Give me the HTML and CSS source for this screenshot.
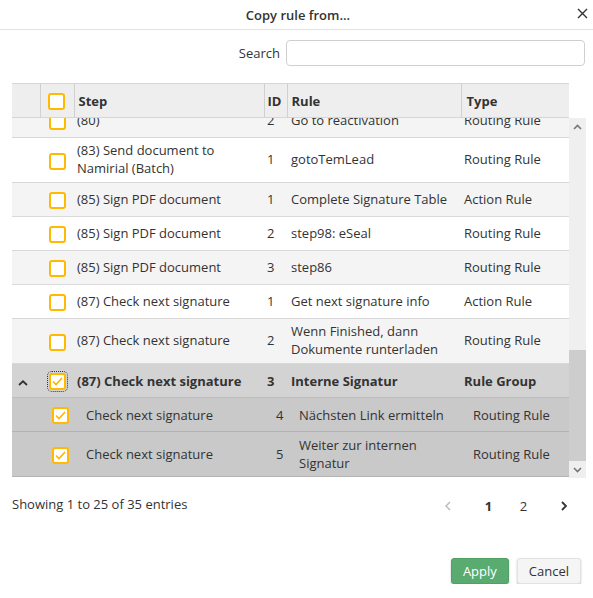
FILE: index.html
```html
<!DOCTYPE html>
<html lang="en">
<head>
  <meta charset="UTF-8">
  <title>Copy rule from...</title>
  <link rel="stylesheet" href="styles.css">
</head>
<body>

  <div class="dialog">
    <div class="dialog-header">
      <h1>Copy rule from...</h1>
      <button class="close-btn" title="Close">
        <svg width="11" height="11" viewBox="0 0 11 11"><path d="M1 1L10 10M10 1L1 10" stroke="#333" stroke-width="1.4" fill="none"/></svg>
      </button>
    </div>

    <div class="search-row">
      <label for="search">Search</label>
      <input type="text" id="search">
    </div>

    <div class="grid">
      <table class="grid-table grid-head">
        <colgroup>
          <col class="c-exp"><col class="c-sel"><col class="c-step"><col class="c-id"><col class="c-rule"><col class="c-type">
        </colgroup>
        <thead>
          <tr>
            <th></th>
            <th class="sel"><span class="cb"></span></th>
            <th>Step</th>
            <th>ID</th>
            <th>Rule</th>
            <th>Type</th>
          </tr>
        </thead>
      </table>

      <div class="grid-body">
        <div class="grid-scroll">
          <table class="grid-table rows">
            <colgroup>
              <col class="c-exp"><col class="c-sel"><col class="c-step"><col class="c-id"><col class="c-rule"><col class="c-type">
            </colgroup>
            <tbody>
              <tr class="alt">
                <td></td><td class="sel"><span class="cb"></span></td>
                <td>(80)</td><td>2</td><td>Go to reactivation</td><td>Routing Rule</td>
              </tr>
              <tr>
                <td></td><td class="sel"><span class="cb"></span></td>
                <td>(83) Send document to Namirial (Batch)</td><td>1</td><td>gotoTemLead</td><td>Routing Rule</td>
              </tr>
              <tr class="alt">
                <td></td><td class="sel"><span class="cb"></span></td>
                <td>(85) Sign PDF document</td><td>1</td><td>Complete Signature Table</td><td>Action Rule</td>
              </tr>
              <tr>
                <td></td><td class="sel"><span class="cb"></span></td>
                <td>(85) Sign PDF document</td><td>2</td><td>step98: eSeal</td><td>Routing Rule</td>
              </tr>
              <tr class="alt">
                <td></td><td class="sel"><span class="cb"></span></td>
                <td>(85) Sign PDF document</td><td>3</td><td>step86</td><td>Routing Rule</td>
              </tr>
              <tr>
                <td></td><td class="sel"><span class="cb"></span></td>
                <td>(87) Check next signature</td><td>1</td><td>Get next signature info</td><td>Action Rule</td>
              </tr>
              <tr class="alt">
                <td></td><td class="sel"><span class="cb"></span></td>
                <td>(87) Check next signature</td><td>2</td><td>Wenn Finished, dann Dokumente runterladen</td><td>Routing Rule</td>
              </tr>
              <tr class="group">
                <td class="exp">
                  <svg width="10" height="6" viewBox="0 0 10 6"><path d="M1 5L5 1.3L9 5" stroke="#333" stroke-width="1.8" fill="none"/></svg>
                </td>
                <td class="sel"><span class="cb checked focus"><svg width="11" height="9" viewBox="0 0 11 9"><path d="M1 4.5L4 7.5L10 1" stroke="#ffb400" stroke-width="1.6" fill="none"/></svg></span></td>
                <td>(87) Check next signature</td><td>3</td><td>Interne Signatur</td><td>Rule Group</td>
              </tr>
              <tr class="child">
                <td></td>
                <td class="sel"><span class="cb checked"><svg width="11" height="9" viewBox="0 0 11 9"><path d="M1 4.5L4 7.5L10 1" stroke="#ffb400" stroke-width="1.6" fill="none"/></svg></span></td>
                <td>Check next signature</td><td>4</td><td>Nächsten Link ermitteln</td><td>Routing Rule</td>
              </tr>
              <tr class="child">
                <td></td>
                <td class="sel"><span class="cb checked"><svg width="11" height="9" viewBox="0 0 11 9"><path d="M1 4.5L4 7.5L10 1" stroke="#ffb400" stroke-width="1.6" fill="none"/></svg></span></td>
                <td>Check next signature</td><td>5</td><td>Weiter zur internen Signatur</td><td>Routing Rule</td>
              </tr>
            </tbody>
          </table>
        </div>

        <div class="scrollbar">
          <div class="sb-btn">
            <svg width="9" height="6" viewBox="0 0 9 6"><path d="M1 5L4.5 1.5L8 5" stroke="#777" stroke-width="1.6" fill="none"/></svg>
          </div>
          <div class="sb-track"><div class="sb-thumb"></div></div>
          <div class="sb-btn">
            <svg width="9" height="6" viewBox="0 0 9 6"><path d="M1 1L4.5 4.5L8 1" stroke="#777" stroke-width="1.6" fill="none"/></svg>
          </div>
        </div>
      </div>
    </div>

    <div class="grid-footer">
      <span class="info">Showing 1 to 25 of 35 entries</span>
      <nav class="pager">
        <span class="pg-arrow prev">
          <svg width="6" height="10" viewBox="0 0 6 10"><path d="M5 1L1 5L5 9" stroke="#bbb" stroke-width="1.5" fill="none"/></svg>
        </span>
        <span class="pg current">1</span>
        <span class="pg">2</span>
        <span class="pg-arrow next">
          <svg width="6" height="10" viewBox="0 0 6 10"><path d="M1 1L5 5L1 9" stroke="#333" stroke-width="1.8" fill="none"/></svg>
        </span>
      </nav>
    </div>

    <div class="actions">
      <button class="apply-btn">Apply</button>
      <button class="cancel-btn">Cancel</button>
    </div>
  </div>

</body>
</html>
```

FILE: styles.css
```css
body {
  margin: 0;
  padding: 0;
  font-family: 'Open Sans', 'Noto Sans', sans-serif;
  font-size: 13px;
  color: #333;
  background: white;
}

.dialog {
  width: 593px;
}

.dialog-header {
  position: relative;
  height: 29px;
  border-bottom: 1px solid #e3e3e3;
  display: flex;
  align-items: center;
  justify-content: center;
}

.dialog-header h1 {
  margin: 0 0 0 3px;
  font-size: 13px;
  font-weight: 600;
}

.close-btn {
  position: absolute;
  top: 7px;
  right: 5px;
  background: none;
  border: none;
  padding: 0;
  cursor: pointer;
}

.search-row {
  display: flex;
  justify-content: flex-end;
  align-items: center;
  gap: 6px;
  margin-top: 10px;
  padding-right: 8px;
}

.search-row input {
  width: 299px;
  height: 26px;
  box-sizing: border-box;
  border: 1px solid #cfcfcf;
  border-radius: 4px;
  font: inherit;
}

.grid {
  margin: 17px 0 0 12px;
}

.grid-table {
  width: 557px;
  table-layout: fixed;
  border-collapse: collapse;
}

.c-exp { width: 28px; }
.c-sel { width: 34px; }
.c-step { width: 190px; }
.c-id { width: 23px; }
.c-rule { width: 174px; }
.c-type { width: 108px; }

.grid-head th {
  height: 33px;
  padding: 0 4px;
  background: #eeeeee;
  border-top: 1px solid #d6d6d6;
  border-bottom: 1px solid #d6d6d6;
  border-left: 1px solid #d0d0d0;
  text-align: left;
  font-weight: bold;
  vertical-align: middle;
}

.grid-head th:first-child {
  border-left: none;
}

.grid-head th:nth-child(4) {
  padding-left: 3px;
}

.grid-head th:last-child {
  padding-left: 5px;
}

.grid-head th.sel {
  text-align: center;
  padding: 0 1px 0 0;
}

.grid-body {
  display: flex;
  width: 574px;
}

.grid-scroll {
  width: 557px;
  height: 360px;
  overflow: hidden;
}

.rows {
  margin-top: -14px;
}

.rows td {
  height: 25px;
  padding: 3px 4px 5px 3px;
  line-height: 18px;
  border-bottom: 1px solid #d9d9d9;
  vertical-align: middle;
  background: white;
}

.rows tr.alt td {
  background: #f4f4f4;
}

.rows td:nth-child(5) {
  padding-left: 4px;
}

.rows td.sel {
  text-align: center;
  padding: 0;
}

.cb {
  display: inline-block;
  width: 17px;
  height: 17px;
  box-sizing: border-box;
  border: 2px solid #ffb900;
  border-radius: 3px;
  background: white;
  vertical-align: middle;
}

.cb.checked {
  display: inline-flex;
  align-items: center;
  justify-content: center;
}

.cb.focus {
  outline: 1px dotted #333;
  outline-offset: 1px;
}

.rows tr.group td {
  padding-top: 4px;
  padding-bottom: 4px;
  background: #d3d3d3;
  font-weight: bold;
  border-bottom-color: #bdbdbd;
}

.rows td.exp {
  text-align: center;
  padding: 0 6px 0 0;
}

.rows tr.child td {
  padding-top: 4px;
  padding-bottom: 4px;
  background: #c9c9c9;
  border-bottom-color: #b3b3b3;
}

.rows tr.child td.sel {
  padding-left: 6px;
}

.rows tr.child td:nth-child(3),
.rows tr.child td:nth-child(5),
.rows tr.child td:nth-child(6) {
  padding-left: 12px;
}

.rows tr.child td:nth-child(4) {
  padding-left: 12px;
}

.scrollbar {
  width: 17px;
  height: 360px;
  display: flex;
  flex-direction: column;
  background: #efefef;
}

.sb-btn {
  height: 17px;
  display: flex;
  align-items: center;
  justify-content: center;
}

.sb-track {
  flex: 1;
  display: flex;
  flex-direction: column;
  justify-content: flex-end;
}

.sb-thumb {
  height: 111px;
  background: #cdcdcd;
}

.grid-footer {
  display: flex;
  justify-content: space-between;
  align-items: center;
  margin-top: 14px;
  padding: 0 12px;
}

.pager {
  display: flex;
  align-items: center;
  margin-top: 4px;
}

.pg,
.pg-arrow {
  display: flex;
  align-items: center;
  justify-content: center;
  height: 20px;
}

.pg {
  width: 35px;
}

.pg.current {
  font-weight: bold;
}

.pg-arrow {
  width: 34px;
}

.pg-arrow.prev {
  margin-right: 6px;
}

.pg-arrow.next {
  margin-left: 6px;
}

.actions {
  display: flex;
  justify-content: flex-end;
  gap: 8px;
  margin-top: 42px;
  padding-right: 12px;
}

.actions button {
  height: 26px;
  padding: 0 11px;
  border-radius: 3px;
  font: inherit;
  cursor: pointer;
}

.apply-btn {
  background: #5aab6f;
  color: white;
  border: 1px solid #52a066;
  box-shadow: 0 1px 2px rgba(0, 0, 0, 0.25);
}

.cancel-btn {
  background: #f5f5f5;
  color: #333;
  border: 1px solid #e2e2e2;
  box-shadow: 0 1px 2px rgba(0, 0, 0, 0.25);
}
```
